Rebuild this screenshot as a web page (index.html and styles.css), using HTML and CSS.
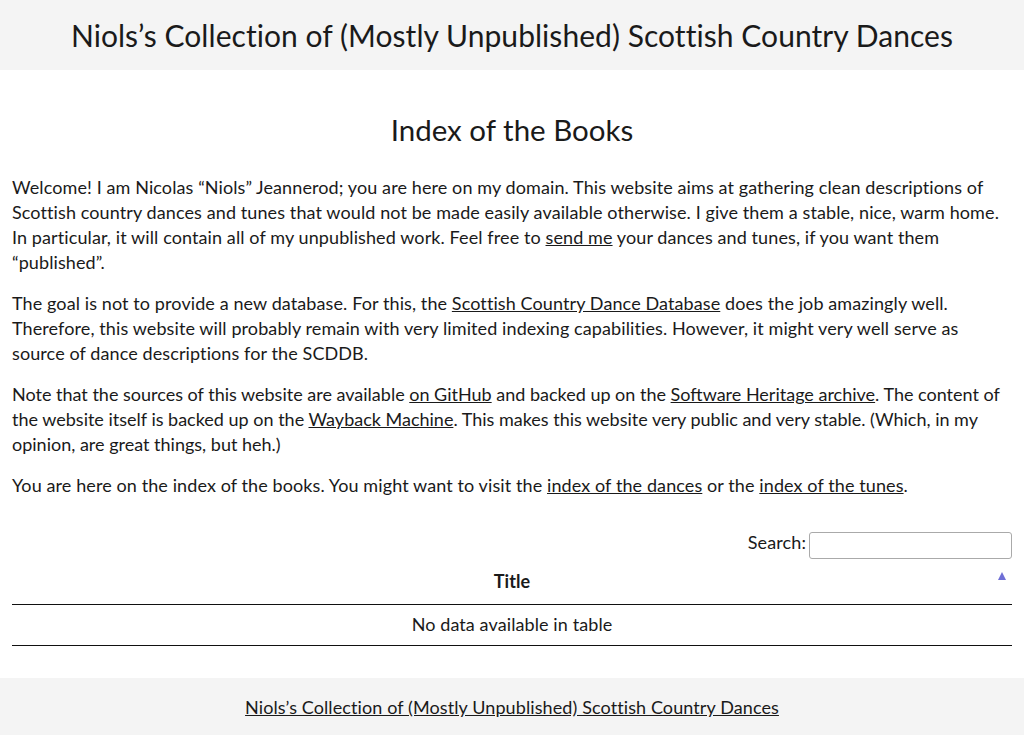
FILE: index.html
```html
<!DOCTYPE html>
<html lang="en">
<head>
<meta charset="utf-8">
<title>Index of the Books</title>
<link rel="stylesheet" href="styles.css">
</head>
<body>
<header class="site-header">
  <h1 class="site-title">Niols’s Collection of (Mostly Unpublished) Scottish Country Dances</h1>
</header>
<main class="content">
  <h2 class="page-title">Index of the Books</h2>
  <p>Welcome! I am Nicolas “Niols” Jeannerod; you are here on my domain. This website aims at gathering clean descriptions of Scottish country dances and tunes that would not be made easily available otherwise. I give them a stable, nice, warm home. In particular, it will contain all of my unpublished work. Feel free to <a href="#">send me</a> your dances and tunes, if you want them “published”.</p>
  <p>The goal is not to provide a new database. For this, the <a href="#">Scottish Country Dance Database</a> does the job amazingly well. Therefore, this website will probably remain with very limited indexing capabilities. However, it might very well serve as source of dance descriptions for the SCDDB.</p>
  <p class="tight">Note that the sources of this website are available <a href="#">on GitHub</a> and backed up on the <a href="#">Software Heritage archive</a>. The content of the website itself is backed up on the <a href="#">Wayback Machine</a>. This makes this website very public and very stable. (Which, in my opinion, are great things, but heh.)</p>
  <p>You are here on the index of the books. You might want to visit the <a href="#">index of the dances</a> or the <a href="#">index of the tunes</a>.</p>
  <div class="table-wrap">
    <div class="search-row">
      <label class="search-label">Search:<input class="search-input" type="search"></label>
    </div>
    <table class="data-table">
      <thead>
        <tr><th class="sort-asc">Title<span class="sort-icon"></span></th></tr>
      </thead>
      <tbody>
        <tr><td class="empty">No data available in table</td></tr>
      </tbody>
    </table>
  </div>
</main>
<footer class="site-footer">
  <a href="#">Niols’s Collection of (Mostly Unpublished) Scottish Country Dances</a>
</footer>
</body>
</html>
```
FILE: styles.css
```css
html, body {
  margin: 0;
  padding: 0;
}
body {
  font-family: Lato, "Open Sans", sans-serif;
  font-size: 18px;
  line-height: 25px;
  color: #1a1a1a;
  letter-spacing: 0.1px;
  background: #fff;
}
a {
  color: #1a1a1a;
  text-decoration: underline;
}
.site-header {
  background: #f4f4f4;
  height: 70px;
  display: flex;
  align-items: center;
  justify-content: center;
}
.site-title {
  margin: 0;
  font-size: 30px;
  font-weight: 400;
  line-height: 36px;
  letter-spacing: 0.05px;
}
.content {
  padding: 0 12px 32px;
}
.page-title {
  margin: 0;
  padding-top: 42px;
  padding-bottom: 27px;
  text-align: center;
  font-size: 29.5px;
  font-weight: 400;
  line-height: 36px;
  letter-spacing: 0;
}
.content p {
  margin: 0 0 16px;
}
.content p.tight {
  letter-spacing: 0;
}
.table-wrap {
  padding-top: 16px;
}
.search-row {
  display: flex;
  justify-content: flex-end;
}
.search-label {
  display: flex;
  align-items: flex-start;
  gap: 3px;
}
.search-input {
  width: 203px;
  height: 27px;
  box-sizing: border-box;
  border: 1px solid #aaa;
  border-radius: 3px;
  background: #fff;
  margin: 2px 0 0;
  padding: 2px 4px;
  font: inherit;
}
.data-table {
  width: 100%;
  border-collapse: collapse;
  margin-top: 5px;
}
.data-table th {
  position: relative;
  font-weight: 700;
  text-align: center;
  padding: 5px 18px 10px;
  border-bottom: 1px solid #111;
}
.sort-icon {
  position: absolute;
  right: 6px;
  top: 8px;
  width: 0;
  height: 0;
  border-left: 4px solid transparent;
  border-right: 4px solid transparent;
  border-bottom: 8px solid #6f6fd6;
}
.data-table td {
  text-align: center;
  padding: 7px 10px 8px;
  border-bottom: 1px solid #111;
}
.site-footer {
  background: #f4f4f4;
  text-align: center;
  padding: 17px 0 19px;
}
```
